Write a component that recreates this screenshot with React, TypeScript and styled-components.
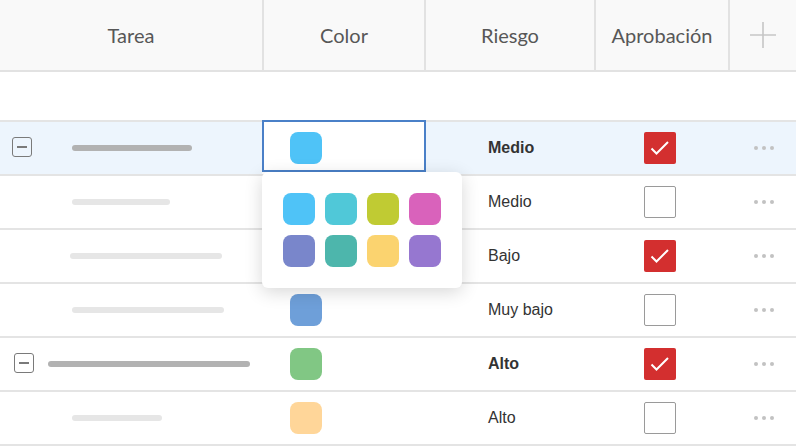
import styled, { createGlobalStyle } from 'styled-components';

const GlobalStyle = createGlobalStyle`
  body {
    margin: 0;
    background: #ffffff;
  }
`;

const COLUMNS = '262px 162px 170px 134px 1fr';

const PALETTE = ['#4fc3f7', '#50c8d8', '#c0cb33', '#d962bb', '#7986cb', '#4db6ac', '#fbd36f', '#9677d0'];

type Task = {
  parent?: boolean;
  toggleLeft?: number;
  barLeft: number;
  barWidth: number;
  color: string;
  risk: string;
  approved: boolean;
  selected?: boolean;
};

const tasks: Task[] = [
  { parent: true, toggleLeft: 12, barLeft: 72, barWidth: 120, color: '#4fc3f7', risk: 'Medio', approved: true, selected: true },
  { barLeft: 72, barWidth: 98, color: '#4fc8d8', risk: 'Medio', approved: false },
  { barLeft: 70, barWidth: 152, color: '#c0cb33', risk: 'Bajo', approved: true },
  { barLeft: 72, barWidth: 152, color: '#6e9fd9', risk: 'Muy bajo', approved: false },
  { parent: true, toggleLeft: 14, barLeft: 48, barWidth: 202, color: '#81c784', risk: 'Alto', approved: true },
  { barLeft: 72, barWidth: 90, color: '#ffd699', risk: 'Alto', approved: false },
];

const App = () => {
  return (
    <>
      <GlobalStyle />
      <Table>
        <Header>
          <HeaderCell>Tarea</HeaderCell>
          <HeaderCell $divider>Color</HeaderCell>
          <HeaderCell $divider>Riesgo</HeaderCell>
          <HeaderCell $divider>Aprobación</HeaderCell>
          <HeaderCell $divider>
            <svg width="26" height="26" viewBox="0 0 26 26">
              <path d="M13 0 V26 M0 13 H26" stroke="#c6c6c6" strokeWidth="1.6" fill="none" />
            </svg>
          </HeaderCell>
        </Header>
        <Body>
          {tasks.map((t, i) => (
            <Row key={i} $selected={t.selected} $first={i === 0}>
              <TaskCell>
                {t.parent && (
                  <Toggle style={{ left: t.toggleLeft }}>
                    <ToggleLine />
                  </Toggle>
                )}
                <Bar $parent={t.parent} style={{ marginLeft: t.barLeft, width: t.barWidth }} />
              </TaskCell>
              <ColorCell $editing={t.selected}>
                <Swatch $color={t.color} />
                {t.selected && (
                  <>
                    <EditFrame />
                    <Picker>
                      {PALETTE.map((c) => (
                        <Swatch key={c} $color={c} />
                      ))}
                    </Picker>
                  </>
                )}
              </ColorCell>
              <RiskCell $bold={t.parent}>{t.risk}</RiskCell>
              <ApproveCell>
                <Check $checked={t.approved}>
                  {t.approved && (
                    <svg width="32" height="32" viewBox="0 0 32 32">
                      <path d="M7.5 16.5 L12.5 21.5 L24 10" stroke="#fff" strokeWidth="2" fill="none" />
                    </svg>
                  )}
                </Check>
              </ApproveCell>
              <MenuCell>
                <Dot />
                <Dot />
                <Dot />
              </MenuCell>
            </Row>
          ))}
        </Body>
      </Table>
    </>
  );
};

const Table = styled.div`
  width: 796px;
  height: 448px;
  overflow: hidden;
  background: #ffffff;
`;

const Header = styled.div`
  display: grid;
  grid-template-columns: ${COLUMNS};
  height: 70px;
  background: #f9f9f9;
  border-bottom: 2px solid #e2e2e2;
`;

const HeaderCell = styled.div<{ $divider?: boolean }>`
  display: flex;
  align-items: center;
  justify-content: center;
  border-left: ${({ $divider }) => ($divider ? '2px solid #e2e2e2' : 'none')};
  font-family: Lato, 'Noto Sans', sans-serif;
  font-size: 20px;
  color: #575757;
`;

const Body = styled.div`
  padding-top: 48px;
`;

const Row = styled.div<{ $selected?: boolean; $first?: boolean }>`
  display: grid;
  grid-template-columns: ${COLUMNS};
  height: 52px;
  border-top: ${({ $first }) => ($first ? '2px solid #e4e4e4' : 'none')};
  border-bottom: 2px solid #e4e4e4;
  background: ${({ $selected }) => ($selected ? '#edf5fd' : '#ffffff')};
  font-family: 'Liberation Sans', Arial, sans-serif;
  font-size: 16px;
  color: #333333;
`;

const TaskCell = styled.div`
  position: relative;
  display: flex;
  align-items: center;
`;

const Toggle = styled.div`
  position: absolute;
  top: 50%;
  margin-top: -11px;
  width: 20px;
  height: 20px;
  box-sizing: border-box;
  border: 1.5px solid #7a7a7a;
  border-radius: 3px;
  display: flex;
  align-items: center;
  justify-content: center;
`;

const ToggleLine = styled.span`
  width: 10px;
  height: 2px;
  background: #7a7a7a;
`;

const Bar = styled.div<{ $parent?: boolean }>`
  height: 6px;
  border-radius: 3px;
  background: ${({ $parent }) => ($parent ? '#b2b2b2' : '#e6e6e6')};
`;

const ColorCell = styled.div<{ $editing?: boolean }>`
  position: relative;
  display: flex;
  align-items: center;
  padding-left: 28px;
  background: ${({ $editing }) => ($editing ? '#ffffff' : 'transparent')};
`;

const EditFrame = styled.div`
  position: absolute;
  top: -2px;
  bottom: 2px;
  left: 0;
  right: -2px;
  border: 2px solid #4a80c8;
  pointer-events: none;
`;

const Swatch = styled.div<{ $color: string }>`
  width: 32px;
  height: 32px;
  border-radius: 8px;
  background: ${({ $color }) => $color};
`;

const Picker = styled.div`
  position: absolute;
  top: 50px;
  left: 0;
  z-index: 5;
  width: 200px;
  box-sizing: border-box;
  padding: 21px;
  display: grid;
  grid-template-columns: repeat(4, 32px);
  gap: 10px;
  background: #ffffff;
  border-radius: 6px;
  box-shadow: 0 4px 18px rgba(0, 0, 0, 0.16);
`;

const RiskCell = styled.div<{ $bold?: boolean }>`
  display: flex;
  align-items: center;
  padding-left: 64px;
  font-weight: ${({ $bold }) => ($bold ? 700 : 400)};
`;

const ApproveCell = styled.div`
  display: flex;
  align-items: center;
  padding-left: 50px;
`;

const Check = styled.div<{ $checked?: boolean }>`
  width: 32px;
  height: 32px;
  box-sizing: border-box;
  border-radius: 2px;
  border: ${({ $checked }) => ($checked ? 'none' : '1px solid #9a9a9a')};
  background: ${({ $checked }) => ($checked ? '#d32f2f' : '#ffffff')};
  display: flex;
`;

const MenuCell = styled.div`
  display: flex;
  align-items: center;
  gap: 4px;
  padding-left: 26px;
`;

const Dot = styled.span`
  width: 4px;
  height: 4px;
  border-radius: 50%;
  background: #c2c2c2;
`;

export default App;
